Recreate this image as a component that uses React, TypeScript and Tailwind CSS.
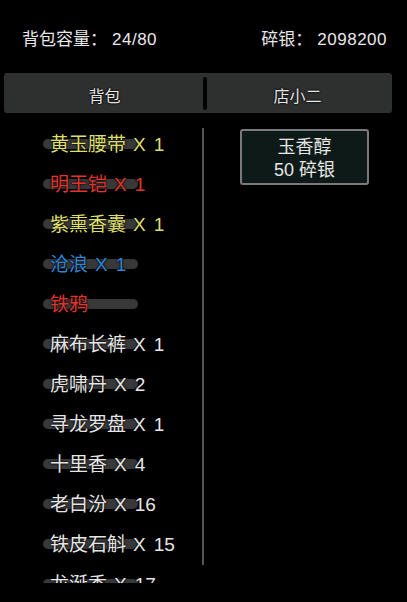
const items: { name: string; count?: string; color: string }[] = [
  { name: '黄玉腰带', count: '1', color: 'text-[#dede6a]' },
  { name: '明王铠', count: '1', color: 'text-[#e2332c]' },
  { name: '紫熏香囊', count: '1', color: 'text-[#dede6a]' },
  { name: '沧浪', count: '1', color: 'text-[#2f84d8]' },
  { name: '铁鸦', color: 'text-[#e2332c]' },
  { name: '麻布长裤', count: '1', color: 'text-[#e6e6e6]' },
  { name: '虎啸丹', count: '2', color: 'text-[#e6e6e6]' },
  { name: '寻龙罗盘', count: '1', color: 'text-[#e6e6e6]' },
  { name: '十里香', count: '4', color: 'text-[#e6e6e6]' },
  { name: '老白汾', count: '16', color: 'text-[#e6e6e6]' },
  { name: '铁皮石斛', count: '15', color: 'text-[#e6e6e6]' },
  { name: '龙涎香', count: '17', color: 'text-[#e6e6e6]' },
];

export default function App() {
  return (
    <div
      className="w-[407px] h-[602px] bg-black overflow-hidden text-[#e8e8e8]"
      style={{ fontFamily: '"Liberation Sans", "Noto Sans CJK SC", sans-serif' }}
    >
      <div className="flex justify-between px-[22px] pt-[30px] pb-[23px] h-[73px] text-[17px] leading-[20px]">
        <span>
          背包容量：<span className="ml-[5px] tracking-[0.5px]">24/80</span>
        </span>
        <span className="mr-[-2px]">
          碎银：<span className="ml-[5px] tracking-[0.5px]">2098200</span>
        </span>
      </div>

      <div className="mx-[4px] w-[388px] h-10 flex items-center rounded-[3px] bg-[#2e302f] text-[16px] pt-[7px] [text-shadow:0_0_2px_#000,0_0_2px_#000]">
        <div className="w-[199px] text-center pl-[2px]">背包</div>
        <div className="w-[4px] h-[33px] -mt-[7px] bg-black rounded-sm" />
        <div className="flex-1 text-center pr-[4px]">店小二</div>
      </div>

      <div className="flex">
        <div className="w-[202px] mt-[11px] h-[459px] overflow-hidden">
          {items.map((it) => (
            <div key={it.name} className="relative h-10 flex items-center pl-[50px]">
              <div className="absolute left-[43px] top-[15px] w-[95px] h-[10px] rounded-full bg-[#383838]" />
              <span
                className={`relative text-[19px] leading-none whitespace-nowrap ${it.color} [text-shadow:0_0_2px_#000,0_0_2px_#000]`}
              >
                {it.name}
                {it.count && (
                  <>
                    <span className="ml-[7px]">X</span>
                    <span className="ml-[8px]">{it.count}</span>
                  </>
                )}
              </span>
            </div>
          ))}
        </div>
        <div className="mt-[15px] w-[2px] h-[437px] bg-[#555]" />
        <div className="pl-[36px] pt-[16px]">
          <div className="w-[129px] h-[56px] border-2 border-[#7a7a7a] rounded-[3px] bg-[#0e1a17] flex flex-col items-center justify-center pt-[4px] text-[18px] leading-[23px] text-[#e6e6e6]">
            <span>玉香醇</span>
            <span>50 碎银</span>
          </div>
        </div>
      </div>
    </div>
  );
}
